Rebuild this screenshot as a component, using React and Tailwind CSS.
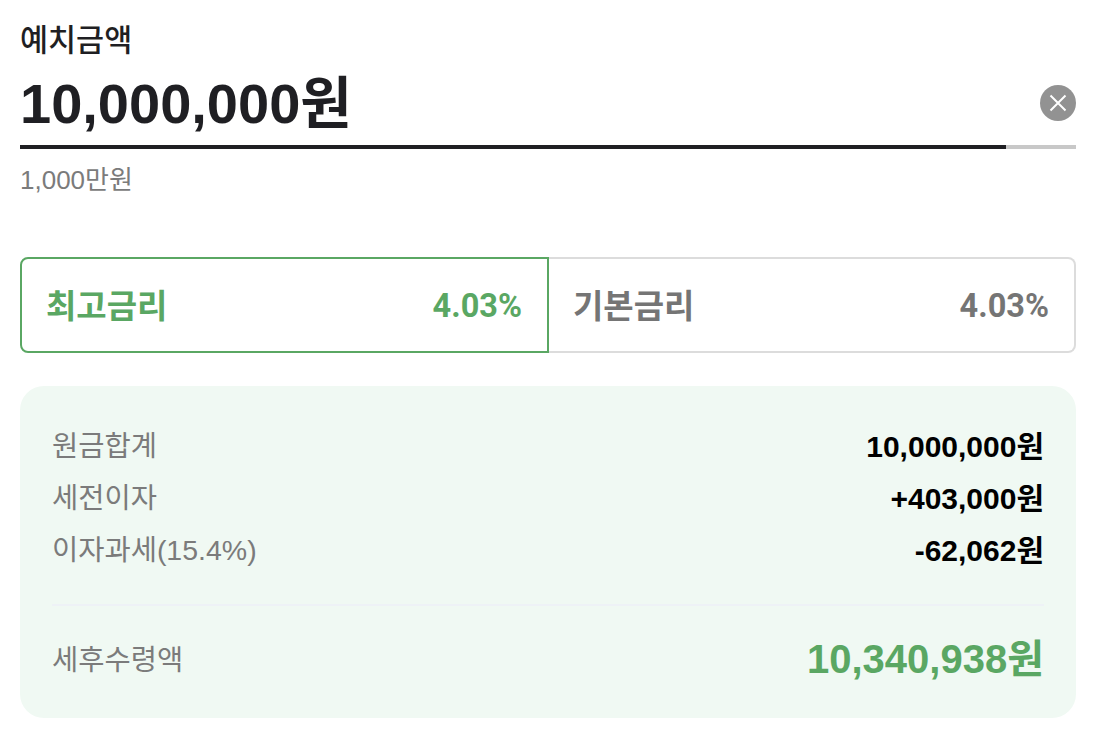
const sans = "font-['Liberation_Sans','Noto_Sans_CJK_KR',sans-serif]";

const Row = ({ label, value }) => (
  <div className="flex justify-between items-center h-[52px]">
    <span className="text-[28.5px] text-[#7b7b7b] pt-px">{label}</span>
    <span className="text-[30px] font-bold text-black">{value}</span>
  </div>
);

const RateTab = ({ label, rate, active }) => (
  <div
    className={
      "flex-1 h-[96px] flex items-center justify-between " +
      (active
        ? "border-2 border-[#5aa763] rounded-l-lg pl-6 pr-[25px] text-[#5aa763]"
        : "border-2 border-l-0 border-[#dcdcdc] rounded-r-lg pl-6 pr-[25px] text-[#757575]")
    }
  >
    <span className="text-[33px] font-bold pt-1">{label}</span>
    <span className="text-[32.5px] font-bold font-['Roboto',sans-serif] pt-[2px]">{rate}</span>
  </div>
);

export default function App() {
  return (
    <div className={sans + " w-[1096px] h-[732px] bg-white px-5 pt-5 overflow-hidden"}>
      <div className="text-[30.5px] leading-[40px] font-medium text-[#1f1f23]">예치금액</div>

      <div className="mt-[2px] flex items-center justify-between h-[83px]">
        <span className="text-[56px] font-bold text-[#1f1f23]">10,000,000원</span>
        <button className="w-9 h-9 mb-px rounded-full bg-[#929292] flex items-center justify-center">
          <svg width="18" height="18" viewBox="0 0 18 18" fill="none" stroke="#fff" strokeWidth="2">
            <path d="M1.5 1.5l15 15M16.5 1.5l-15 15" />
          </svg>
        </button>
      </div>
      <div className="flex h-1">
        <div className="w-[986px] bg-[#1f1f23]" />
        <div className="flex-1 bg-[#c8c8c8]" />
      </div>
      <div className="mt-[15px] text-[26px] leading-[32px] text-[#7b7b7b]">1,000만원</div>

      <div className="mt-[61px] flex">
        <RateTab label="최고금리" rate="4.03%" active />
        <RateTab label="기본금리" rate="4.03%" />
      </div>

      <div className="mt-[33px] h-[332px] rounded-3xl bg-[#f0f9f3] px-8 pt-[34px]">
        <Row label="원금합계" value="10,000,000원" />
        <Row label="세전이자" value="+403,000원" />
        <Row label="이자과세(15.4%)" value="-62,062원" />
        <div className="mt-[28px] border-t-2 border-[#eef2f6]" />
        <div className="mt-[24px] flex justify-between items-center h-[56px]">
          <span className="text-[28.5px] text-[#7b7b7b] pt-1">세후수령액</span>
          <span className="text-[40px] font-bold text-[#5aa763] pt-[2px]">10,340,938원</span>
        </div>
      </div>
    </div>
  );
}
